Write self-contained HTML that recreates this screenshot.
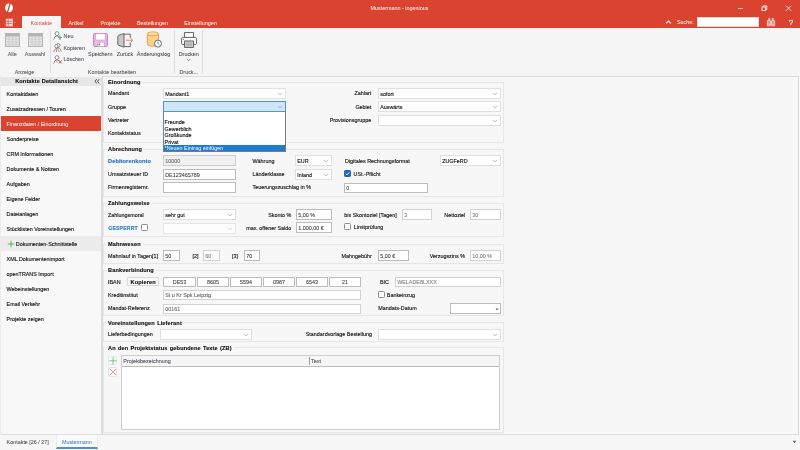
<!DOCTYPE html>
<html lang="de">
<head>
<meta charset="utf-8">
<title>Mustermann - ingenious</title>
<style>
*{box-sizing:border-box;margin:0;padding:0}
html,body{width:800px;height:450px;overflow:hidden;background:#f7f7f7}
body{position:relative;font-family:"Liberation Sans",sans-serif;font-size:5.4px;line-height:7px;color:#161616;-webkit-text-stroke:.14px currentColor}
.a{position:absolute;white-space:nowrap}
.t{position:absolute;white-space:nowrap;height:7px;line-height:7px;margin-top:.5px}
.b{font-weight:bold;font-size:5.6px;letter-spacing:.12px;word-spacing:.6px}
.r{text-align:right}
.c{text-align:center}
.w{color:#fff;-webkit-text-stroke:0}
.g{color:#7d7d7d}
.bl{color:#2a6fb5}
.box{position:absolute;border:1px solid #e6e6e6}
.gt{position:absolute;white-space:nowrap;height:7px;line-height:7px;margin-top:.6px;font-weight:bold;font-size:5.6px;letter-spacing:.12px;word-spacing:.6px;background:#f7f7f7;padding:0 2px 0 1px;color:#111}
.f{position:absolute;background:#fff;border:1px solid #bcbcbc;white-space:nowrap;overflow:hidden;padding-left:1.2px;line-height:8px;color:#3a3a3a;-webkit-text-stroke:.08px}
.f.d{color:#7a7a7a;border-color:#d2d2d2}
.f.ro{background:#f0f0f0;border-color:#cfcfcf;color:#666}
.cb{position:absolute;background:#fff;border:1px solid #e0e0e0;white-space:nowrap;overflow:hidden;padding-left:1.2px;line-height:8px}
.cb svg.ch{position:absolute;right:1.8px;top:2.6px}
.cb.foc{background:#cfe5f8;border-color:#4b93da}
.cb.dis{border-color:#e6e6e6;background:#fdfdfd}
.ck{position:absolute;width:7px;height:7px;border:1px solid #8c8c8c;border-radius:1.3px;background:#fff}
.ck.on{background:#1a66c0;border-color:#1a66c0;width:7px;height:7px}
.sep{position:absolute;width:1px;background:#dedede;top:30px;height:43px}
.cap{color:#6c6c6c}
.dim{color:#707070}
</style>
</head>
<body>
<div id="wrap" style="position:absolute;left:0;top:0;width:800px;height:450px;will-change:transform">
<!-- ===== title bar + tab strip ===== -->
<div class="a" id="red" style="left:0;top:0;width:800px;height:28px;background:#d9432f"></div>
<svg class="a" style="left:4px;top:3px" width="10" height="10" viewBox="0 0 10 10"><ellipse cx="5" cy="4.8" rx="4" ry="4.4" fill="#fff"/><path d="M6.3 0 L3.4 9.6" stroke="#d9432f" stroke-width="1.3" fill="none"/></svg>
<div class="t w c" style="left:340px;top:4px;width:119px">Mustermann - ingenious</div>
<!-- window controls -->
<div class="a" style="left:738px;top:7.500px;width:5.400px;height:1px;background:#f3c5bd"></div>
<svg class="a" style="left:761px;top:5px" width="7" height="7" viewBox="0 0 7 7"><rect x="1" y="2" width="3.6" height="3.6" fill="none" stroke="#fff" stroke-width=".8"/><path d="M2.2 2V.9h3.6v3.6H4.7" fill="none" stroke="#fff" stroke-width=".8"/></svg>
<svg class="a" style="left:785px;top:5px" width="7" height="7" viewBox="0 0 7 7"><path d="M1 .8l5 5M6 .8l-5 5" stroke="#fff" stroke-width=".8" fill="none"/></svg>
<!-- app menu -->
<svg class="a" style="left:5px;top:18px" width="12" height="9" viewBox="0 0 12 9"><rect x="1.200" y="1.100" width="6.200" height="6.800" fill="#f3d3cd" stroke="#fbeeeb" stroke-width=".7"/><path d="M3.200 1.100v6.800M1.200 3.400h6.200M1.200 5.600h6.200" stroke="#d9432f" stroke-width=".6"/><path d="M8.800 4.200l.9 .9 .9-.9z" fill="#f6ddd8"/></svg>
<!-- tabs -->
<div class="a" style="left:22px;top:16px;width:38.5px;height:12px;background:#f5f5f5"></div>
<div class="t c" style="left:22px;top:19px;width:38.5px;color:#d9432f;-webkit-text-stroke:0">Kontakte</div>
<div class="t w c" style="left:61px;top:19px;width:30px">Artikel</div>
<div class="t w c" style="left:91px;top:19px;width:39px">Projekte</div>
<div class="t w c" style="left:130px;top:19px;width:45px">Bestellungen</div>
<div class="t w c" style="left:175px;top:19px;width:51px">Einstellungen</div>
<!-- search -->
<svg class="a" style="left:665px;top:19px" width="7" height="6" viewBox="0 0 7 6"><path d="M1.200 4.300l2.300-2.300 2.300 2.300" stroke="#fff" stroke-width="1.100" fill="none"/></svg>
<div class="t w" style="left:677px;top:18.6px">Suche:</div>
<div class="a" style="left:696.5px;top:17.2px;width:62.3px;height:9.4px;background:#fff;border:1px solid #e8d6d2"></div>
<svg class="a" style="left:766px;top:17px" width="10" height="10" viewBox="0 0 10 10"><path d="M2.500 1h1.600v2.400H2.500zM5.900 1h1.600v2.400H5.900z" fill="#f6ddd8"/><path d="M1.300 3.600h3.100v5.200H1.300zM5.600 3.600h3.100v5.200H5.600z" fill="#e58a7c" stroke="#f8e6e2" stroke-width=".7"/><path d="M4.400 4.400h1.200v1.800H4.400z" fill="#f6ddd8"/><path d="M1.300 7.200h3.100M5.600 7.200h3.100" stroke="#f8e6e2" stroke-width=".6"/></svg>
<div class="t w" style="left:788.800px;top:18.400px;font-size:8px;-webkit-text-stroke:.2px #fff">?</div>

<!-- ===== ribbon ===== -->
<div class="a" style="left:0;top:28px;width:800px;height:48px;background:#f5f5f5"></div>
<!-- Alle / Auswahl table icons -->
<svg class="a" style="left:5px;top:33px" width="15" height="14" viewBox="0 0 15 14"><rect x=".4" y=".4" width="14.2" height="13.2" fill="#e4e4e4" stroke="#a9a9a9" stroke-width=".8"/><rect x=".8" y=".8" width="13.4" height="2.6" fill="#b4b4b4"/><path d="M.4 3.6h14.2M.4 6.2h14.2M.4 8.7h14.2M.4 11.2h14.2M4 3.6v10M7.5 3.6v10M11 3.6v10" stroke="#c4c4c4" stroke-width=".6"/></svg>
<svg class="a" style="left:27.5px;top:33px" width="15" height="14" viewBox="0 0 15 14"><rect x=".4" y=".4" width="14.2" height="13.2" fill="#e4e4e4" stroke="#a9a9a9" stroke-width=".8"/><rect x=".8" y=".8" width="13.4" height="2.6" fill="#b4b4b4"/><path d="M.4 3.6h14.2M.4 6.2h14.2M.4 8.7h14.2M.4 11.2h14.2M4 3.6v10M7.5 3.6v10M11 3.6v10" stroke="#c4c4c4" stroke-width=".6"/></svg>
<div class="t c dim" style="left:0;top:50px;width:24.5px">Alle</div>
<div class="t c dim" style="left:22px;top:50px;width:26px">Auswahl</div>
<div class="t c cap" style="left:0;top:68.3px;width:49px">Anzeige</div>
<div class="sep" style="left:49.5px"></div>
<!-- Neu / Kopieren / Loeschen -->
<svg class="a" style="left:52.5px;top:31px" width="10" height="10" viewBox="0 0 10 10"><circle cx="4" cy="2.6" r="1.9" fill="#fff" stroke="#686868" stroke-width=".75"/><path d="M.8 8.6c.3-2.6 1.6-3.6 3.2-3.6s2.9 1 3.2 3.6" fill="#fff" stroke="#686868" stroke-width=".75"/><path d="M6.900 4.200v4.400M4.700 6.400h4.400" stroke="#4cba6a" stroke-width=".9"/></svg>
<svg class="a" style="left:52.5px;top:43px" width="10" height="10" viewBox="0 0 10 10"><circle cx="5.3" cy="2.4" r="1.8" fill="#fff" stroke="#686868" stroke-width=".75"/><path d="M2.6 8.4c.2-2.4 1.3-3.4 2.7-3.4s2.6 1 2.8 3.4" fill="#fff" stroke="#686868" stroke-width=".75"/><circle cx="3.4" cy="3.2" r="1.7" fill="#fff" stroke="#686868" stroke-width=".75"/><path d="M.8 9c.2-2.3 1.2-3.3 2.6-3.3S5.800 6.700 6 9" fill="#fff" stroke="#686868" stroke-width=".75"/><path d="M3.4 6.5v2.5" stroke="#d9432f" stroke-width=".8"/></svg>
<svg class="a" style="left:52.5px;top:55px" width="10" height="10" viewBox="0 0 10 10"><circle cx="4" cy="2.6" r="1.9" fill="#fff" stroke="#686868" stroke-width=".75"/><path d="M.8 8.6c.3-2.6 1.6-3.6 3.2-3.6s2.9 1 3.200 3.600" fill="#fff" stroke="#686868" stroke-width=".75"/><path d="M5.700 5.200l3.200 3.200M8.900 5.200l-3.200 3.200" stroke="#e8474a" stroke-width=".8"/><path d="M3.600 6.200l.6 1.600" stroke="#a33" stroke-width=".7"/></svg>
<div class="t" style="left:63.5px;top:32.2px;color:#4a4e58;-webkit-text-stroke:.05px">Neu</div>
<div class="t" style="left:63.5px;top:44px;color:#4a4e58;-webkit-text-stroke:.05px">Kopieren</div>
<div class="t" style="left:63.5px;top:55.9px;color:#4a4e58;-webkit-text-stroke:.05px">Löschen</div>
<!-- Speichern -->
<svg class="a" style="left:93px;top:33px" width="15" height="14" viewBox="0 0 15 14"><path d="M.6 1.600q0-1 1-1h11.800q1 0 1 1v10.800q0 1-1 1H1.600q-1 0-1-1z" fill="#e6bbe5" stroke="#c274c1" stroke-width=".9"/><rect x="2.800" y=".8" width="9.400" height="6.200" fill="#fff" stroke="#c98bc8" stroke-width=".5"/><rect x="4.800" y="9.200" width="6.600" height="4.200" fill="#fff" stroke="#c98bc8" stroke-width=".5"/><rect x="5.500" y="10.300" width="1.400" height="2.200" fill="#777"/></svg>
<div class="t c" style="left:84px;top:50px;width:32.500px;color:#454850;-webkit-text-stroke:.05px">Speichern</div>
<!-- Zurueck -->
<svg class="a" style="left:116.500px;top:32.500px" width="17" height="15" viewBox="0 0 17 15"><path d="M7 1.200h6.300v3.800M13.300 9.600v4h-6.300" fill="none" stroke="#5a5a5a" stroke-width=".9"/><path d="M7 .6L1.600 2.300q-.8.300-.8 1.100v7.800q0 .8.800 1.100L7 14.200z" fill="#c9c9c9" stroke="#5a5a5a" stroke-width=".9"/><path d="M8.800 7.200h6.800M13.400 5l2.300 2.200-2.300 2.200" fill="none" stroke="#ef6f7c" stroke-width=".9"/></svg>
<div class="t c" style="left:112px;top:50px;width:26px;color:#454850;-webkit-text-stroke:.05px">Zurück</div>
<!-- Aenderungslog -->
<svg class="a" style="left:146px;top:31px" width="17" height="17" viewBox="0 0 17 17"><path d="M1.300 2.800v10.400c0 1.100 2.500 2 5.600 2s5.600-.9 5.600-2V2.800" fill="#fbd28b" stroke="#e89a3c" stroke-width=".9"/><ellipse cx="6.900" cy="2.800" rx="5.600" ry="1.900" fill="#fde0a8" stroke="#e89a3c" stroke-width=".9"/><circle cx="12" cy="12.600" r="3.500" fill="#fff" stroke="#5a5a5a" stroke-width=".9"/><path d="M12 10.400v2.300l1.500 1.200" fill="none" stroke="#3a8ee0" stroke-width=".9"/></svg>
<div class="t c" style="left:134px;top:50px;width:39px;color:#454850;-webkit-text-stroke:.05px">Änderungslog</div>
<div class="t c cap" style="left:50px;top:68.300px;width:124px">Kontakte bearbeiten</div>
<div class="sep" style="left:174px"></div>
<!-- Drucken -->
<svg class="a" style="left:180.500px;top:32px" width="16" height="16" viewBox="0 0 16 16"><rect x="3.600" y=".6" width="8.800" height="5.400" fill="#fff" stroke="#555" stroke-width=".9"/><rect x=".6" y="5.400" width="14.800" height="7" rx="1" fill="#fff" stroke="#555" stroke-width=".9"/><rect x="3.600" y="9" width="8.800" height="6.400" fill="#d6d6d6" stroke="#555" stroke-width=".9"/><path d="M5 11h6M5 12.400h6M5 13.800h6" stroke="#8e8e8e" stroke-width=".6"/><rect x="1.800" y="6.800" width="1.300" height="1.100" fill="#2f8be0"/></svg>
<div class="t c" style="left:175px;top:50px;width:27.500px;color:#454850;-webkit-text-stroke:.05px">Drucken</div>
<svg class="a" style="left:186px;top:57.500px" width="5" height="4" viewBox="0 0 5 4"><path d="M.8 1l1.700 1.700L4.200 1" fill="none" stroke="#666" stroke-width=".7"/></svg>
<div class="t c cap" style="left:175px;top:68.300px;width:27.500px">Druck...</div>
<div class="sep" style="left:202px"></div>

<!-- ===== sidebar ===== -->
<div class="a" style="left:0;top:76px;width:1.400px;height:359px;background:#ececec"></div>
<div class="a" id="side" style="left:1.400px;top:76.500px;width:100.300px;height:358px;background:#f8f8f8;border-right:1px solid #dedede;border-bottom:1px solid #dedede"></div>
<div class="a" style="left:1.400px;top:76.500px;width:100px;height:9px;background:#e7e7e7"></div>
<div class="t b c" style="left:1.400px;top:77.700px;width:90.500px;color:#111;font-size:5.600px;word-spacing:0">Kontakte Detailansicht</div>
<svg class="a" style="left:93.700px;top:78px" width="6" height="7" viewBox="0 0 6 7"><path d="M2.700 1.200L1 3.300l1.700 2.100M5.200 1.200L3.500 3.300l1.700 2.100" fill="none" stroke="#333" stroke-width=".85"/></svg>
<div class="t" style="left:6.600px;top:90px">Kontaktdaten</div>
<div class="t" style="left:6.600px;top:105px">Zusatzadressen / Touren</div>
<div class="a" style="left:1.400px;top:116px;width:100px;height:15px;background:#d9432f"></div>
<div class="t w" style="left:6.600px;top:120px">Finanzdaten / Einordnung</div>
<div class="t" style="left:6.600px;top:135px">Sonderpreise</div>
<div class="t" style="left:6.600px;top:150px">CRM Informationen</div>
<div class="t" style="left:6.600px;top:165px">Dokumente &amp; Notizen</div>
<div class="t" style="left:6.600px;top:180px">Aufgaben</div>
<div class="t" style="left:6.600px;top:195px">Eigene Felder</div>
<div class="t" style="left:6.600px;top:210px">Dateianlagen</div>
<div class="t" style="left:6.600px;top:225px">Stücklisten Voreinstellungen</div>
<div class="a" style="left:1.400px;top:236px;width:100px;height:15px;background:#ececec"></div>
<svg class="a" style="left:6.500px;top:240px" width="8" height="8" viewBox="0 0 8 8"><path d="M4 .8v6.400M.8 4h6.400" stroke="#4caf50" stroke-width=".9"/></svg>
<div class="t" style="left:15.800px;top:240px">Dokumenten-Schnittstelle</div>
<div class="t" style="left:6.600px;top:255px">XML Dokumentenimport</div>
<div class="t" style="left:6.600px;top:270px">openTRANS Import</div>
<div class="t" style="left:6.600px;top:285px">Webeinstellungen</div>
<div class="t" style="left:6.600px;top:300px">Email Verkehr</div>
<div class="t" style="left:6.600px;top:315px">Projekte zeigen</div>

<!-- bottom tabs -->
<div class="t" style="left:6.600px;top:438.200px;color:#4c4c4c;-webkit-text-stroke:.05px">Kontakte [26 / 27]</div>
<div class="a" style="left:56.400px;top:435px;width:41.300px;height:14px;background:#fbfbfb;border-bottom:2px solid #4a8fd2;border-left:1px solid #ececec;border-right:1px solid #ececec"></div>
<div class="t" style="left:61.900px;top:438.200px;color:#3f86cc;-webkit-text-stroke:.05px">Mustermann</div>
<svg class="a" style="left:791.500px;top:440px" width="5" height="4" viewBox="0 0 5 4"><path d="M.6 .8h3.800L2.500 3.200z" fill="#666"/></svg>

<!-- ===== main panel ===== -->
<div class="a" id="main" style="left:102px;top:76px;width:697px;height:359.300px;border:1px solid #dcdcdc;background:#f7f7f7"></div>

<!-- ===== group: Einordnung ===== -->
<div class="box" style="left:103px;top:82px;width:401px;height:61px"></div>
<div class="gt" style="left:107px;top:78.300px">Einordnung</div>
<div class="t" style="left:108px;top:89.500px">Mandant</div>
<div class="cb" style="left:163px;top:88px;width:123px;height:11px;line-height:9px;padding-top:.7px">Mandant1<svg class="ch" width="6" height="4" viewBox="0 0 6 4"><path d="M.9 .8l2.100 2.100L5.100 .8" fill="none" stroke="#969696" stroke-width=".65"/></svg></div>
<div class="t" style="left:108px;top:103px">Gruppe</div>
<div class="cb foc" style="left:163px;top:101px;width:123px;height:11px;line-height:9px;padding-top:.7px"><svg class="ch" width="6" height="4" viewBox="0 0 6 4"><path d="M.9 .8l2.100 2.100L5.100 .8" fill="none" stroke="#969696" stroke-width=".65"/></svg></div>
<div class="t" style="left:108px;top:116.500px">Vertreter</div>
<div class="t" style="left:108px;top:129.700px">Kontaktstatus</div>
<div class="t r" style="left:311px;top:89.500px;width:60.300px">Zahlart</div>
<div class="cb" style="left:378px;top:88px;width:123px;height:11px;line-height:9px;padding-top:.7px">sofort<svg class="ch" width="6" height="4" viewBox="0 0 6 4"><path d="M.9 .8l2.100 2.100L5.100 .8" fill="none" stroke="#969696" stroke-width=".65"/></svg></div>
<div class="t r" style="left:311px;top:103px;width:60.300px">Gebiet</div>
<div class="cb" style="left:378px;top:101px;width:123px;height:11px;line-height:9px;padding-top:.7px">Auswärts<svg class="ch" width="6" height="4" viewBox="0 0 6 4"><path d="M.9 .8l2.100 2.100L5.100 .8" fill="none" stroke="#969696" stroke-width=".65"/></svg></div>
<div class="t r" style="left:311px;top:116.500px;width:60.300px">Provisionsgruppe</div>
<div class="cb" style="left:378px;top:115px;width:123px;height:11px;line-height:9px;padding-top:.7px"><svg class="ch" width="6" height="4" viewBox="0 0 6 4"><path d="M.9 .8l2.100 2.100L5.100 .8" fill="none" stroke="#969696" stroke-width=".65"/></svg></div>

<!-- ===== group: Abrechnung ===== -->
<div class="box" style="left:103px;top:149px;width:401px;height:48px"></div>
<div class="gt" style="left:107px;top:145.700px">Abrechnung</div>
<div class="t b bl" style="left:108px;top:157px">Debitorenkonto</div>
<div class="f ro" style="left:163px;top:155px;width:73px;height:11px;line-height:9px;padding-top:.7px">10000</div>
<div class="t" style="left:108px;top:170.500px">Umsatzsteuer ID</div>
<div class="f" style="left:163px;top:169px;width:73px;height:11px;line-height:9px;padding-top:.7px">DE123465789</div>
<div class="t" style="left:108px;top:183.800px">Firmenregisternr.</div>
<div class="f" style="left:163px;top:182px;width:73px;height:11px;line-height:9px;padding-top:.7px"></div>
<div class="t" style="left:252.500px;top:157px">Währung</div>
<div class="cb" style="left:295px;top:155px;width:37px;height:11px;line-height:9px;padding-top:.7px">EUR<svg class="ch" width="6" height="4" viewBox="0 0 6 4"><path d="M.9 .8l2.100 2.100L5.100 .8" fill="none" stroke="#969696" stroke-width=".65"/></svg></div>
<div class="t" style="left:252.500px;top:170.500px">Länderklasse</div>
<div class="cb" style="left:295px;top:169px;width:37px;height:11px;line-height:9px;padding-top:.7px">Inland<svg class="ch" width="6" height="4" viewBox="0 0 6 4"><path d="M.9 .8l2.100 2.100L5.100 .8" fill="none" stroke="#969696" stroke-width=".65"/></svg></div>
<div class="t" style="left:252.500px;top:183.800px">Teuerungszuschlag in %</div>
<div class="f" style="left:344px;top:183px;width:84px;height:10px;line-height:8px">0</div>
<div class="t" style="left:345px;top:157px">Digitales Rechnungsformat</div>
<div class="cb" style="left:440px;top:155px;width:61px;height:11px;line-height:9px;padding-top:.7px">ZUGFeRD<svg class="ch" width="6" height="4" viewBox="0 0 6 4"><path d="M.9 .8l2.100 2.100L5.100 .8" fill="none" stroke="#969696" stroke-width=".65"/></svg></div>
<div class="ck on" style="left:344px;top:170.200px"><svg style="position:absolute;left:-1px;top:-1px" width="7" height="7" viewBox="0 0 7 7"><path d="M1.700 3.600l1.300 1.300 2.400-2.700" fill="none" stroke="#fff" stroke-width=".9"/></svg></div>
<div class="t" style="left:353.500px;top:170.300px">USt.-Pflicht</div>

<!-- ===== group: Zahlungsweise ===== -->
<div class="box" style="left:103px;top:203px;width:401px;height:34px"></div>
<div class="gt" style="left:107px;top:199.800px">Zahlungsweise</div>
<div class="t" style="left:108px;top:211.500px">Zahlungsmoral</div>
<div class="cb" style="left:163px;top:209px;width:73px;height:11px;line-height:9px;padding-top:.7px">sehr gut<svg class="ch" width="6" height="4" viewBox="0 0 6 4"><path d="M.9 .8l2.100 2.100L5.100 .8" fill="none" stroke="#969696" stroke-width=".65"/></svg></div>
<div class="t b" style="left:108.300px;top:224.500px;font-size:5.200px;color:#3583c4">GESPERRT</div>
<div class="ck" style="left:141px;top:224px"></div>
<div class="cb dis" style="left:163px;top:223px;width:73px;height:11px;line-height:9px;padding-top:.7px"><svg class="ch" width="6" height="4" viewBox="0 0 6 4"><path d="M.9 .8l2.100 2.100L5.100 .8" fill="none" stroke="#bdbdbd" stroke-width=".65"/></svg></div>
<div class="t r" style="left:240px;top:211.500px;width:51.300px">Skonto %</div>
<div class="f" style="left:296px;top:209px;width:36px;height:11px;line-height:9px;padding-top:.7px">5,00 %</div>
<div class="t r" style="left:240px;top:224.500px;width:51.300px">max. offener Saldo</div>
<div class="f" style="left:296px;top:222px;width:36px;height:11px;line-height:9px;padding-top:.7px">1.000,00 €</div>
<div class="t" style="left:344.300px;top:211.500px">bis Skontoziel [Tagen]</div>
<div class="f d" style="left:402px;top:209px;width:30px;height:11px;line-height:9px;padding-top:.7px">3</div>
<div class="t" style="left:444.300px;top:211.500px">Nettoziel</div>
<div class="f d" style="left:470px;top:209px;width:31px;height:11px;line-height:9px;padding-top:.7px">30</div>
<div class="ck" style="left:344px;top:223px"></div>
<div class="t" style="left:353.700px;top:223px">Limitprüfung</div>

<!-- ===== group: Mahnwesen ===== -->
<div class="box" style="left:103px;top:244px;width:401px;height:20px"></div>
<div class="gt" style="left:107px;top:240.400px">Mahnwesen</div>
<div class="t" style="left:108px;top:252px">Mahnlauf in Tagen[1]</div>
<div class="f" style="left:163px;top:250px;width:17px;height:11px;line-height:9px;padding-top:.7px">50</div>
<div class="t" style="left:192.500px;top:252px">[2]</div>
<div class="f d" style="left:203px;top:250px;width:17px;height:11px;line-height:9px;padding-top:.7px">60</div>
<div class="t" style="left:232px;top:252px">[3]</div>
<div class="f" style="left:244px;top:250px;width:16px;height:11px;line-height:9px;padding-top:.7px">70</div>
<div class="t r" style="left:320px;top:252px;width:51.800px">Mahngebühr</div>
<div class="f" style="left:378px;top:250px;width:31px;height:11px;line-height:9px;padding-top:.7px">5,00 €</div>
<div class="t r" style="left:420px;top:252px;width:45px">Verzugszins %</div>
<div class="f d" style="left:470px;top:250px;width:31px;height:11px;line-height:9px;padding-top:.7px">10,00 %</div>

<!-- ===== group: Bankverbindung ===== -->
<div class="box" style="left:103px;top:270px;width:401px;height:46px"></div>
<div class="gt" style="left:107px;top:266.900px">Bankverbindung</div>
<div class="t" style="left:108px;top:278.500px">IBAN</div>
<div class="a b c" style="left:127px;top:277.300px;width:32.400px;height:9px;line-height:8px;border:1px solid #d9d9d9;border-radius:1px;background:#fbfbfb;color:#111">Kopieren</div>
<div class="f c" style="left:163px;top:277px;width:33px;height:10px;line-height:8px;padding:0">DE53</div>
<div class="f c" style="left:197px;top:277px;width:32px;height:10px;line-height:8px;padding:0">8605</div>
<div class="f c" style="left:230px;top:277px;width:32px;height:10px;line-height:8px;padding:0">5594</div>
<div class="f c" style="left:263px;top:277px;width:32px;height:10px;line-height:8px;padding:0">0987</div>
<div class="f c" style="left:296px;top:277px;width:32px;height:10px;line-height:8px;padding:0">6543</div>
<div class="f c" style="left:329px;top:277px;width:32px;height:10px;line-height:8px;padding:0">21</div>
<div class="t" style="left:380px;top:278.500px">BIC</div>
<div class="f d" style="left:395px;top:277px;width:106px;height:10px;line-height:8px">WELADE8LXXX</div>
<div class="t" style="left:108px;top:291.500px">Kreditinstitut</div>
<div class="f d" style="left:163px;top:290px;width:198px;height:10px;line-height:8px"><span style="color:#5e5e5e">St u Kr Spk Leipzig</span></div>
<div class="ck" style="left:378px;top:291px"></div>
<div class="t" style="left:386.800px;top:291.200px">Bankeinzug</div>
<div class="t" style="left:108px;top:304.700px">Mandat-Referenz</div>
<div class="f d" style="left:163px;top:304px;width:198px;height:10px;line-height:8px"><span style="color:#666">00161</span></div>
<div class="t" style="left:378.300px;top:304.700px">Mandats-Datum</div>
<div class="f" style="left:450px;top:303px;width:51px;height:11px;line-height:9px;padding-top:.7px"><svg style="position:absolute;right:1.500px;top:3.600px" width="4" height="3" viewBox="0 0 4 3"><path d="M.5 .6h3L2 2.400z" fill="#666"/></svg></div>

<!-- ===== group: Voreinstellungen Lieferant ===== -->
<div class="box" style="left:103px;top:322px;width:401px;height:20px"></div>
<div class="gt" style="left:107px;top:319.400px">Voreinstellungen Lieferant</div>
<div class="t" style="left:108px;top:330.200px">Lieferbedingungen</div>
<div class="cb" style="left:160px;top:329px;width:92px;height:11px;line-height:9px;padding-top:.7px"><svg class="ch" width="6" height="4" viewBox="0 0 6 4"><path d="M.9 .8l2.100 2.100L5.100 .8" fill="none" stroke="#969696" stroke-width=".65"/></svg></div>
<div class="t r" style="left:300px;top:330.200px;width:72px">Standardvorlage Bestellung</div>
<div class="cb" style="left:378px;top:329px;width:123px;height:11px;line-height:9px;padding-top:.7px"><svg class="ch" width="6" height="4" viewBox="0 0 6 4"><path d="M.9 .8l2.100 2.100L5.100 .8" fill="none" stroke="#969696" stroke-width=".65"/></svg></div>

<!-- ===== group: Projektstatus Texte ===== -->
<div class="box" style="left:103px;top:347px;width:401px;height:86px"></div>
<div class="gt" style="left:107px;top:344.200px">An den Projektstatus gebundene Texte (ZB)</div>
<div class="a" style="left:107.500px;top:355.500px;width:9.800px;height:9.700px;border:1px solid #e4e4e4;border-radius:1.200px;background:#fdfdfd"><svg style="position:absolute;left:0;top:0" width="8" height="8" viewBox="0 0 8 8"><path d="M4 .3v7.200M.3 3.900h7.400" stroke="#62c277" stroke-width=".9"/></svg></div>
<div class="a" style="left:107.500px;top:367px;width:9.800px;height:10px;border:1px solid #e4e4e4;border-radius:1.200px;background:#fdfdfd"><svg style="position:absolute;left:0;top:0" width="8" height="8" viewBox="0 0 8 8"><path d="M.7 .9l6.400 6.200M7.100 .9L.7 7.100" stroke="#ee6f72" stroke-width=".75"/></svg></div>
<div class="a" style="left:121.200px;top:355px;width:379px;height:75px;border:1px solid #cecece;background:#fff"></div>
<div class="a" style="left:122.200px;top:356px;width:377px;height:11px;background:#f6f6f6;border-bottom:1px solid #bcbcbc"></div>
<div class="a" style="left:309.300px;top:357px;width:1px;height:8px;background:#9a9a9a"></div>
<div class="t" style="left:123.300px;top:357px;color:#5c606a">Projektbezeichnung</div>
<div class="t" style="left:311px;top:357px;color:#5c606a">Text</div>

<!-- ===== dropdown list of "Gruppe" ===== -->
<div class="a" id="dd" style="left:163px;top:111px;width:123px;height:41px;background:#fff;border:1px solid #7a7a7a;border-top-color:#4b93da;border-left-color:#5a86b4"></div>
<div class="t" style="left:164.600px;top:118.500px;line-height:6.500px;height:6.500px;color:#111">Freunde</div>
<div class="t" style="left:164.600px;top:125.100px;line-height:6.500px;height:6.500px;color:#111">Gewerblich</div>
<div class="t" style="left:164.600px;top:131.700px;line-height:6.500px;height:6.500px;color:#111">Großkunde</div>
<div class="t" style="left:164.600px;top:138.300px;line-height:6.500px;height:6.500px;color:#111">Privat</div>
<div class="a" style="left:164px;top:145px;width:121px;height:6px;background:#1c7bd4"></div>
<div class="t w" style="left:164.600px;top:144.500px;line-height:6.500px;height:6.500px">*Neuen Eintrag einfügen</div>
</div>
</body>
</html>
